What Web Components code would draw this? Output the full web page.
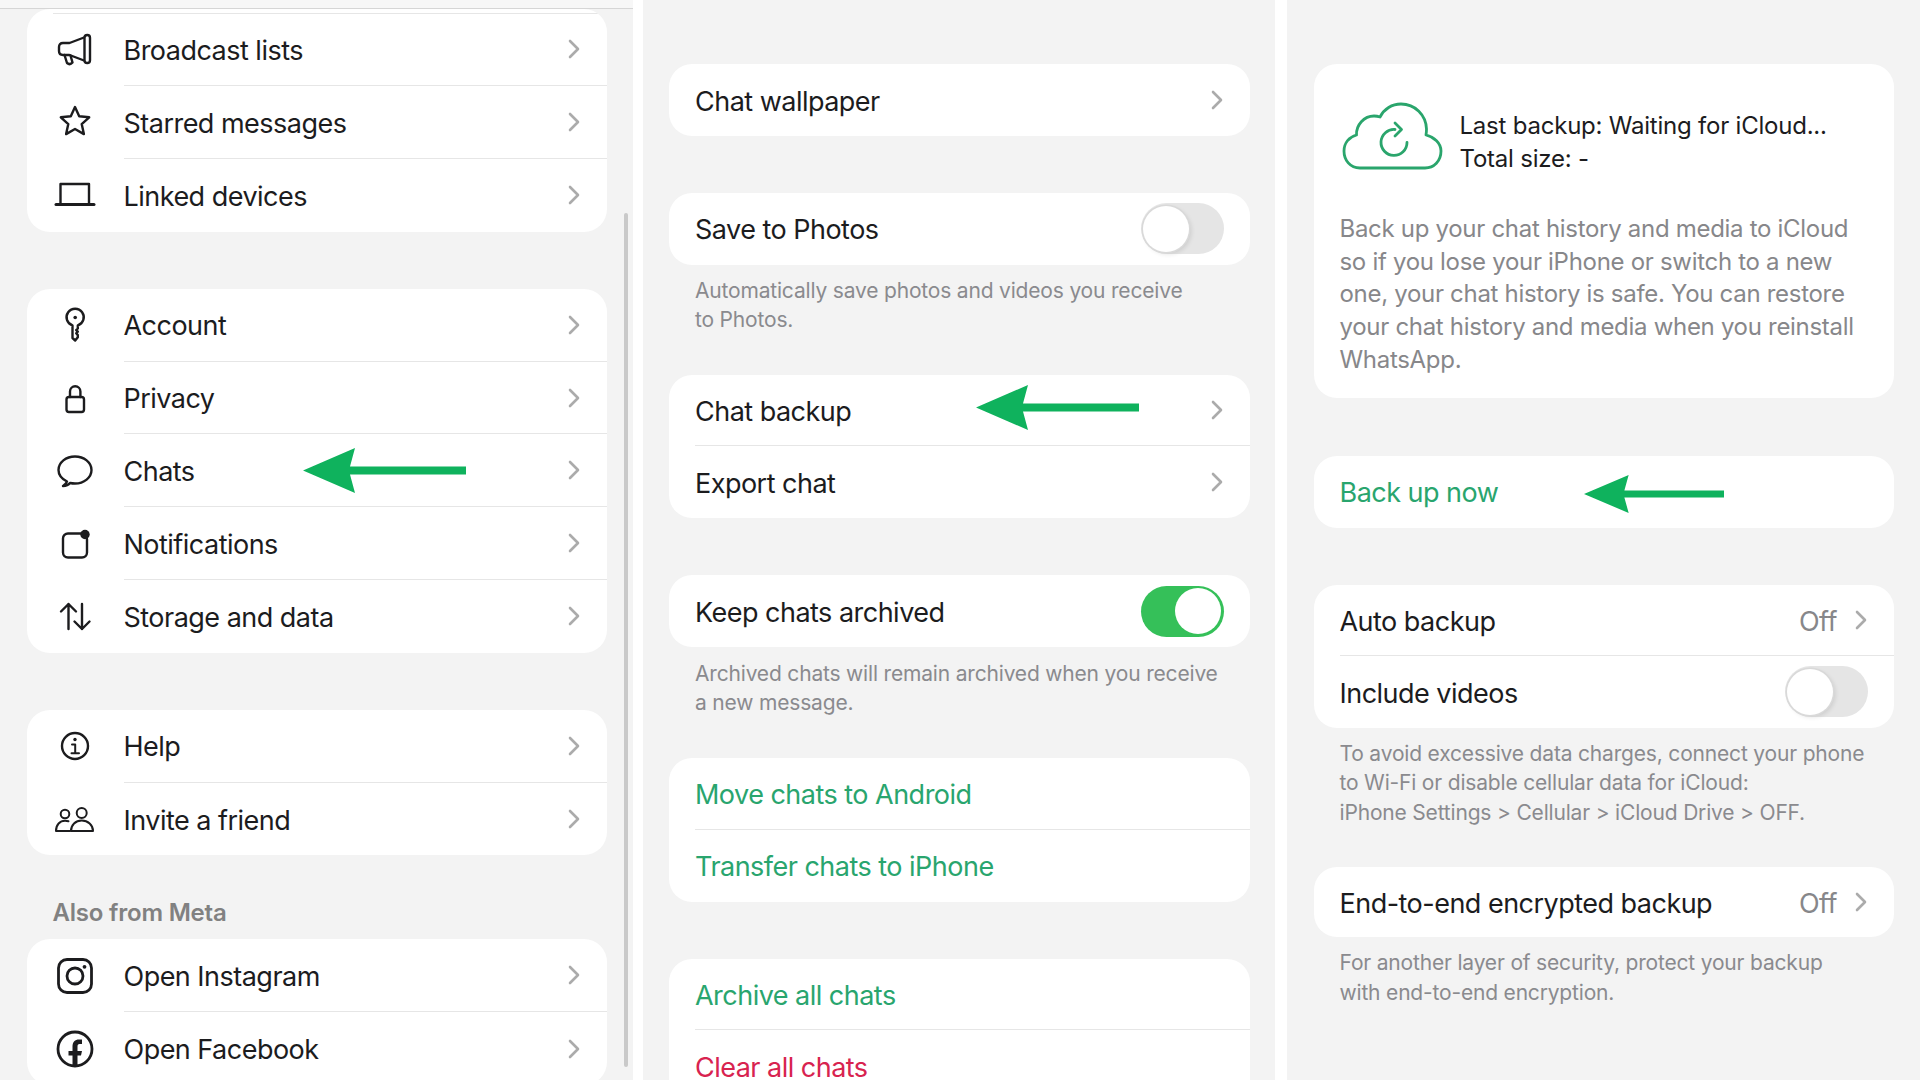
<!DOCTYPE html>
<html lang="en">
<head>
<meta charset="utf-8">
<title>WhatsApp chat backup steps</title>
<style>
  html, body { margin: 0; height: 100%; background: #fff; }
  body {
    display: flex;
    height: 1080px;
    overflow: hidden;
    font-family: Inter, "Liberation Sans", sans-serif;
    color: #1c1c1e;
  }
</style>
</head>
<body>
  <wa-screen style="width:633px;--pad-l:27px;--pad-r:26px;--row-h:72.8px" scrollbar>
    <wa-topstrip slot="top"></wa-topstrip>
    <wa-card>
      <wa-row style="--row-h:4.5px"></wa-row>
      <wa-row chevron><wa-icon slot="icon" name="broadcast"></wa-icon>Broadcast lists</wa-row>
      <wa-row chevron><wa-icon slot="icon" name="star"></wa-icon>Starred messages</wa-row>
      <wa-row chevron last><wa-icon slot="icon" name="laptop"></wa-icon>Linked devices</wa-row>
    </wa-card>
    <wa-card style="margin-top:57px">
      <wa-row chevron><wa-icon slot="icon" name="key"></wa-icon>Account</wa-row>
      <wa-row chevron><wa-icon slot="icon" name="lock"></wa-icon>Privacy</wa-row>
      <wa-row chevron>
        <wa-icon slot="icon" name="chat"></wa-icon>Chats
        <wa-arrow slot="over" style="left:276px;top:14px;width:163px;height:45px"></wa-arrow>
      </wa-row>
      <wa-row chevron><wa-icon slot="icon" name="bell"></wa-icon>Notifications</wa-row>
      <wa-row chevron last><wa-icon slot="icon" name="updown"></wa-icon>Storage and data</wa-row>
    </wa-card>
    <wa-card style="margin-top:57px">
      <wa-row chevron><wa-icon slot="icon" name="info"></wa-icon>Help</wa-row>
      <wa-row chevron last><wa-icon slot="icon" name="people"></wa-icon>Invite a friend</wa-row>
    </wa-card>
    <wa-section-title style="margin-top:42.5px">Also from Meta</wa-section-title>
    <wa-card style="margin-top:11.5px">
      <wa-row chevron><wa-icon slot="icon" name="instagram"></wa-icon>Open Instagram</wa-row>
      <wa-row chevron last><wa-icon slot="icon" name="facebook"></wa-icon>Open Facebook</wa-row>
    </wa-card>
  </wa-screen>

  <wa-screen style="width:632px;margin-left:10px;--pad-l:26px;--pad-r:25px;--row-h:71.8px;--top:64px;--gutter:26px">
    <wa-card>
      <wa-row chevron last>Chat wallpaper</wa-row>
    </wa-card>
    <wa-card style="margin-top:57px">
      <wa-row last>Save to Photos<wa-switch slot="end"></wa-switch></wa-row>
    </wa-card>
    <wa-note>Automatically save photos and videos you receive<br>to Photos.</wa-note>
    <wa-card style="margin-top:40px">
      <wa-row chevron>
        Chat backup
        <wa-arrow slot="over" style="left:307px;top:10px;width:163px;height:45px"></wa-arrow>
      </wa-row>
      <wa-row chevron last>Export chat</wa-row>
    </wa-card>
    <wa-card style="margin-top:57px">
      <wa-row last>Keep chats archived<wa-switch slot="end" on></wa-switch></wa-row>
    </wa-card>
    <wa-note style="margin-top:12px">Archived chats will remain archived when you receive<br>a new message.</wa-note>
    <wa-card style="margin-top:40px">
      <wa-row tone="green">Move chats to Android</wa-row>
      <wa-row tone="green" last>Transfer chats to iPhone</wa-row>
    </wa-card>
    <wa-card style="margin-top:57px">
      <wa-row tone="green">Archive all chats</wa-row>
      <wa-row tone="red" last>Clear all chats</wa-row>
    </wa-card>
  </wa-screen>

  <wa-screen style="width:633px;margin-left:12px;--pad-l:27px;--pad-r:26px;--row-h:71.6px;--top:64px">
    <wa-backup-info>
      <span slot="status">Last backup: Waiting for iCloud...<br>Total size: -</span>
      Back up your chat history and media to iCloud<br>so if you lose your iPhone or switch to a new<br>one, your chat history is safe. You can restore<br>your chat history and media when you reinstall<br>WhatsApp.
    </wa-backup-info>
    <wa-card style="margin-top:58px">
      <wa-row tone="green" last>
        Back up now
        <wa-arrow slot="over" style="left:270px;top:19px;width:140px;height:38px"></wa-arrow>
      </wa-row>
    </wa-card>
    <wa-card style="margin-top:57px">
      <wa-row chevron value="Off">Auto backup</wa-row>
      <wa-row last>Include videos<wa-switch slot="end"></wa-switch></wa-row>
    </wa-card>
    <wa-note>To avoid excessive data charges, connect your phone<br>to Wi-Fi or disable cellular data for iCloud:<br>iPhone Settings &gt; Cellular &gt; iCloud Drive &gt; OFF.</wa-note>
    <wa-card style="margin-top:40px">
      <wa-row style="--row-h:70px" chevron value="Off" last>End-to-end encrypted backup</wa-row>
    </wa-card>
    <wa-note>For another layer of security, protect your backup<br>with end-to-end encryption.</wa-note>
  </wa-screen>

<script>
const ICONS = {
  broadcast: `<path d="M31 9.5 16.5 15H10q-4 0-4 4v4q0 4 4 4h6.5L31 32.5"/><rect x="31.5" y="7" width="5.5" height="28" rx="2.7"/><path d="M11.5 27l2.5 8q3 2.5 5.5-.5l-2-7"/>`,
  star: `<path d="M22 6l4.200 9.300 10 1-7.500 6.800 2.200 10-8.900-5.100-8.900 5.100 2.200-10-7.500-6.800 10-1z"/>`,
  laptop: `<path d="M7.5 30V11h28.5v19"/><path d="M3 31.5h38" stroke-width="3"/>`,
  key: `<path d="M19.5 22.5A8.600 8.600 0 1 1 24.800 22.500V25.500l-1.600 1.600 1.600 1.600-1.600 1.600 1.600 1.800v2.200L22.200 37.500 19.500 35z"/><circle cx="22.200" cy="14.500" r="1.800" fill="#1c1c1e" stroke="none"/>`,
  lock: `<rect x="13.500" y="21" width="17.500" height="15" rx="2.500"/><path d="M17 21v-5.500a5.200 5.200 0 0 1 10.400 0V21"/>`,
  chat: `<path d="M14 32.500C9 30 5.500 26 5.500 21 5.500 13.500 13 7.500 22 7.500S38.500 13.500 38.500 21 31 34.500 22 34.500c-2 0-3.500-.2-5-.5-1.500 2-4 3-7 3 2-1.500 3.500-2.500 4-4.500z"/>`,
  bell: `<path d="M28 11.500H15a5 5 0 0 0-5 5V30.500a5 5 0 0 0 5 5H29a5 5 0 0 0 5-5V17"/><circle cx="32" cy="12.500" r="4.700" fill="#1c1c1e" stroke="none"/>`,
  updown: `<path d="M15.500 35V10M8 17.500 15.500 10l7.500 7.500M29 10V35M21.500 27.500 29 35l7.500-7.500"/>`,
  info: `<circle cx="22" cy="22" r="13"/><path d="M19 20.500h3.200v8.500M18.500 29.300h7.500" stroke-width="2"/><circle cx="22" cy="15.500" r="1.700" fill="#1c1c1e" stroke="none"/>`,
  people: `<g stroke-width="2"><circle cx="12" cy="17" r="4.300"/><circle cx="28.700" cy="16" r="5"/><path d="M18 34c0-6 4.500-10.500 10.700-10.500S40 28 40 34z"/><path d="M15.500 24.200c-1-.3-2.200-.4-3.500-.4-5 0-9 3.700-9 10.200h14"/></g>`,
  instagram: `<rect x="5.500" y="5.500" width="33" height="33" rx="8.500" stroke-width="2.800"/><circle cx="22" cy="22" r="8" stroke-width="2.800"/><circle cx="31.500" cy="12.800" r="1.900" fill="#1c1c1e" stroke="none"/>`,
  facebook: `<circle cx="22" cy="22" r="17" stroke-width="2.800"/><path fill="#1c1c1e" stroke="none" d="M19.500 39V28.500h-4V24h4v-4.500c0-4.500 2.500-7 6.500-7h3V17h-2.500c-1.500 0-2 1-2 2.500V24H29l-1 4.500h-3.500V39z"/>`,
};

const iconTemplate = document.createElement('template');
iconTemplate.innerHTML = `
  <style>
    :host { display: block; width: 44px; height: 44px; }
    svg { display: block; width: 44px; height: 44px; fill: none; stroke: #1c1c1e; stroke-width: 2.4; stroke-linecap: round; stroke-linejoin: round; }
  </style>
  <svg viewBox="0 0 44 44"></svg>
`;

class WaIcon extends HTMLElement {
  constructor() {
    super();
    this.attachShadow({ mode: 'open' }).append(iconTemplate.content.cloneNode(true));
  }

  connectedCallback() {
    this.shadowRoot.querySelector('svg').innerHTML = ICONS[this.getAttribute('name')];
  }
}

const screenTemplate = document.createElement('template');
screenTemplate.innerHTML = `
  <style>
    :host {
      display: block;
      position: relative;
      flex: none;
      height: 100%;
      overflow: hidden;
      background: #f3f3f3;
    }
    .content { padding: var(--top, 0) var(--pad-r) 0 var(--pad-l); }
    .scrollbar {
      display: none;
      position: absolute;
      right: 5px;
      top: 213px;
      width: 4px;
      height: 854px;
      border-radius: 2px;
      background: #c9c9c9;
    }
    :host([scrollbar]) .scrollbar { display: block; }
  </style>
  <slot name="top"></slot>
  <div class="content"><slot></slot></div>
  <div class="scrollbar"></div>
`;

class WaScreen extends HTMLElement {
  constructor() {
    super();
    this.attachShadow({ mode: 'open' }).append(screenTemplate.content.cloneNode(true));
  }
}

const topStripTemplate = document.createElement('template');
topStripTemplate.innerHTML = `
  <style>
    :host { display: block; height: 8px; background: #f7f7f7; border-bottom: 1px solid #d6d6d6; }
  </style>
`;

class WaTopStrip extends HTMLElement {
  constructor() {
    super();
    this.attachShadow({ mode: 'open' }).append(topStripTemplate.content.cloneNode(true));
  }
}

const cardTemplate = document.createElement('template');
cardTemplate.innerHTML = `
  <style>
    :host { display: block; background: #fff; border-radius: 23px; overflow: hidden; }
  </style>
  <slot></slot>
`;

class WaCard extends HTMLElement {
  constructor() {
    super();
    this.attachShadow({ mode: 'open' }).append(cardTemplate.content.cloneNode(true));
  }
}

const rowTemplate = document.createElement('template');
rowTemplate.innerHTML = `
  <style>
    :host {
      display: flex;
      position: relative;
      height: var(--row-h);
      box-sizing: border-box;
      font-size: 27px;
      letter-spacing: -0.52px;
      color: #1c1c1e;
    }
    :host([tone="green"]) { color: #29a56e; }
    :host([tone="red"]) { color: #d8234f; }
    .icon { display: none; width: 96.5px; box-sizing: border-box; padding-right: 1.5px; flex: none; align-items: center; justify-content: center; }
    :host(.has-icon) .icon { display: flex; }
    .gutter { width: var(--gutter, 25.5px); flex: none; }
    :host(.has-icon) .gutter { display: none; }
    .body {
      flex: 1;
      min-width: 0;
      display: flex;
      align-items: center;
      border-bottom: 1.5px solid #e6e6e6;
      padding-right: 27px;
    }
    :host([last]) .body { border-bottom: 0; }
    .label { flex: 1; white-space: nowrap; line-height: 26px; padding-top: 3.4px; }
    .value { color: #87878a; margin-right: 18px; padding-top: 3.4px; display: none; }
    :host([value]) .value { display: block; }
    .chevron { display: none; width: 12px; height: 20px; fill: none; stroke: #ababab; stroke-width: 2.6; stroke-linecap: round; stroke-linejoin: round; }
    :host([chevron]) .chevron { display: block; }
  </style>
  <div class="icon"><slot name="icon"></slot></div>
  <div class="gutter"></div>
  <div class="body">
    <span class="label"><slot></slot></span>
    <span class="value"></span>
    <slot name="end"></slot>
    <svg class="chevron" viewBox="0 0 12 20"><path d="M2 2l8 8-8 8"/></svg>
  </div>
  <slot name="over"></slot>
`;

class WaRow extends HTMLElement {
  constructor() {
    super();
    this.attachShadow({ mode: 'open' }).append(rowTemplate.content.cloneNode(true));
  }

  connectedCallback() {
    this.shadowRoot.querySelector('.value').textContent = this.getAttribute('value') || '';
    if (this.querySelector('[slot="icon"]')) this.classList.add('has-icon');
  }
}

const switchTemplate = document.createElement('template');
switchTemplate.innerHTML = `
  <style>
    :host {
      display: block;
      position: relative;
      flex: none;
      width: 83px;
      height: 51px;
      margin-right: -0.5px;
      border-radius: 26px;
      background: #e5e5e5;
    }
    :host([on]) { background: #35c059; }
    .knob {
      position: absolute;
      top: 2.5px;
      left: 2.5px;
      width: 46px;
      height: 46px;
      border-radius: 50%;
      background: #fff;
      box-shadow: 0 0 0 1.5px #d9d9d9, 2px 2px 5px rgba(0, 0, 0, .12);
    }
    :host([on]) .knob { left: 34.5px; box-shadow: none; }
  </style>
  <div class="knob"></div>
`;

class WaSwitch extends HTMLElement {
  constructor() {
    super();
    this.attachShadow({ mode: 'open' }).append(switchTemplate.content.cloneNode(true));
  }
}

const noteTemplate = document.createElement('template');
noteTemplate.innerHTML = `
  <style>
    :host {
      display: block;
      margin-top: 11px;
      padding-left: var(--gutter, 25.5px);
      font-size: 21px;
      line-height: 29.5px;
      letter-spacing: -0.18px;
      white-space: nowrap;
      color: #8a8a8e;
    }
  </style>
  <slot></slot>
`;

class WaNote extends HTMLElement {
  constructor() {
    super();
    this.attachShadow({ mode: 'open' }).append(noteTemplate.content.cloneNode(true));
  }
}

const sectionTitleTemplate = document.createElement('template');
sectionTitleTemplate.innerHTML = `
  <style>
    :host {
      display: block;
      padding-left: 25.5px;
      font-size: 24px;
      font-weight: 600;
      line-height: 30px;
      letter-spacing: -0.2px;
      color: #818181;
    }
  </style>
  <slot></slot>
`;

class WaSectionTitle extends HTMLElement {
  constructor() {
    super();
    this.attachShadow({ mode: 'open' }).append(sectionTitleTemplate.content.cloneNode(true));
  }
}

const arrowTemplate = document.createElement('template');
arrowTemplate.innerHTML = `
  <style>
    :host { display: block; position: absolute; }
    svg { display: block; width: 100%; height: 100%; }
  </style>
  <svg viewBox="0 0 163 45" preserveAspectRatio="none">
    <polygon fill="#0fb25d" points="0,22.500 52,0 47,18.500 163,18.500 163,26.500 47,26.500 52,45"/>
  </svg>
`;

class WaArrow extends HTMLElement {
  constructor() {
    super();
    this.attachShadow({ mode: 'open' }).append(arrowTemplate.content.cloneNode(true));
  }
}

const backupTemplate = document.createElement('template');
backupTemplate.innerHTML = `
  <style>
    :host { display: block; height: 334px; box-sizing: border-box; padding: 38px 25.5px 0; background: #fff; border-radius: 23px; }
    .head { display: flex; align-items: center; gap: 17px; height: 68px; }
    svg { flex: none; margin-left: 2px; width: 101px; height: 68px; fill: none; stroke: #2aa56c; stroke-width: 2.8; stroke-linecap: round; stroke-linejoin: round; }
    .status { padding-top: 11px; font-size: 24px; line-height: 33px; letter-spacing: -0.22px; color: #1c1c1e; white-space: nowrap; }
    .text { margin-top: 43px; font-size: 24px; line-height: 32.700px; letter-spacing: -0.3px; color: #87878a; white-space: nowrap; }
  </style>
  <div class="head">
    <svg viewBox="-1 -1 101 68">
      <path d="M17 65C7 65 1 57 1 48 1 40 6 34 13.500 32 13 22 21 13 31 13c2 0 4 .3 6 1C41 6 49 1 58 1c14 0 25 11 25.500 25 0 2-.2 4-.5 6 8 2 15 8 15 16 0 10-7 17-16 17z"/>
      <path d="M52 26.500A13 13 0 1 0 64 39.500M52 20l6.500 6.500L52 33"/>
    </svg>
    <div class="status"><slot name="status"></slot></div>
  </div>
  <div class="text"><slot></slot></div>
`;

class WaBackupInfo extends HTMLElement {
  constructor() {
    super();
    this.attachShadow({ mode: 'open' }).append(backupTemplate.content.cloneNode(true));
  }
}

customElements.define('wa-icon', WaIcon);
customElements.define('wa-screen', WaScreen);
customElements.define('wa-topstrip', WaTopStrip);
customElements.define('wa-card', WaCard);
customElements.define('wa-row', WaRow);
customElements.define('wa-switch', WaSwitch);
customElements.define('wa-note', WaNote);
customElements.define('wa-section-title', WaSectionTitle);
customElements.define('wa-arrow', WaArrow);
customElements.define('wa-backup-info', WaBackupInfo);
</script>
</body>
</html>
